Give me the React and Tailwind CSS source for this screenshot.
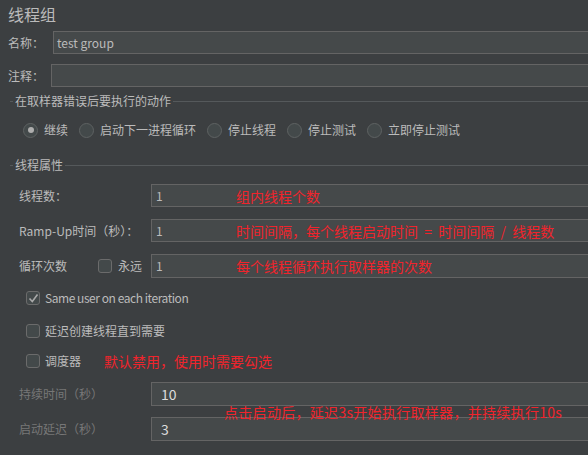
import React from 'react';

const labelCls = 'text-[12px] text-[#bbbbbb] whitespace-nowrap';
const redCls = 'text-[14px] text-[#f0242c] whitespace-nowrap leading-[18px]';

function Radio({ checked, label }) {
  return (
    <div className="flex items-center gap-[6px]">
      <span className="w-[15px] h-[15px] rounded-full border border-[#5e6262] bg-[#43494a] flex items-center justify-center">
        {checked && <span className="w-[6px] h-[6px] rounded-full bg-[#aeaeae]" />}
      </span>
      <span className={labelCls}>{label}</span>
    </div>
  );
}

function Check({ checked }) {
  return (
    <span className="w-[14px] h-[14px] rounded-[3px] border border-[#6b6b6b] bg-[#43494a] flex items-center justify-center shrink-0">
      {checked && (
        <svg width="11" height="11" viewBox="0 0 11 11">
          <polyline points="1.5,5.5 4.3,8.5 9.5,1.5" fill="none" stroke="#a9a9a9" strokeWidth="1.6" />
        </svg>
      )}
    </span>
  );
}

function Legend({ title }) {
  return (
    <div className="flex items-center h-[14px] pl-[2px] mr-[-8px]">
      <span className="w-[3px] h-px bg-[#55595b]" />
      <span className="px-[2px] text-[12px] text-[#bbbbbb] whitespace-nowrap">{title}</span>
      <span className="flex-1 h-px bg-[#55595b]" />
    </div>
  );
}

function Field({ value, note, tall, big }) {
  return (
    <div
      className={`flex-1 flex items-center mr-[-10px] border border-[#646464] bg-[#45494a] ${tall ? 'h-[24px]' : 'h-[23px]'}`}
    >
      <span className={`${big ? 'pl-[9px] text-[14px] text-[#dcdcdc]' : 'pl-[4px] text-[12px] text-[#bbbbbb]'} w-[84px] shrink-0`}>
        {value}
      </span>
      {note && <span className={`${redCls} whitespace-pre`}>{note}</span>}
    </div>
  );
}

export default function App() {
  return (
    <div className="relative w-[588px] h-[455px] overflow-hidden bg-[#3c3f41] font-['Noto_Sans_CJK_SC','Noto_Sans',sans-serif]">
      <div className="flex flex-col pt-[5px] px-[8px]">
        <div className="h-[18px] leading-[18px] text-[16px] text-[#bbbbbb]">线程组</div>

        <div className="flex items-center mt-[8px]">
          <span className={`${labelCls} w-[45px]`}>名称：</span>
          <div className="flex-1 flex items-center h-[23px] mr-[-10px] border border-[#646464] bg-[#45494a] pl-[3px] text-[12px] text-[#bbbbbb]">
            test group
          </div>
        </div>

        <div className="flex items-center mt-[10px]">
          <span className={`${labelCls} w-[43px]`}>注释：</span>
          <div className="flex-1 h-[23px] mr-[-10px] border border-[#646464] bg-[#45494a]" />
        </div>

        <div className="mt-[7px]">
          <Legend title="在取样器错误后要执行的动作" />
        </div>

        <div className="flex items-center gap-[11px] h-[16px] mt-[14px] pl-[15px]">
          <Radio checked label="继续" />
          <Radio label="启动下一进程循环" />
          <Radio label="停止线程" />
          <Radio label="停止测试" />
          <Radio label="立即停止测试" />
        </div>

        <div className="mt-[20px]">
          <Legend title="线程属性" />
        </div>

        <div className="flex items-center mt-[12px] pl-[11px]">
          <span className={`${labelCls} w-[132px]`}>线程数：</span>
          <Field value="1" note="组内线程个数" />
        </div>

        <div className="flex items-center mt-[12px] pl-[11px]">
          <span className={`${labelCls} w-[132px]`}>Ramp-Up时间（秒）：</span>
          <Field value="1" note="时间间隔，每个线程启动时间  =  时间间隔  /  线程数" />
        </div>

        <div className="flex items-center mt-[12px] pl-[11px]">
          <div className="w-[132px] flex items-center">
            <span className={`${labelCls} w-[79px]`}>循环次数</span>
            <Check />
            <span className={`${labelCls} ml-[6px]`}>永远</span>
          </div>
          <Field value="1" note="每个线程循环执行取样器的次数" tall />
        </div>

        <div className="flex items-center gap-[5px] h-[16px] mt-[12px] pl-[18px]">
          <Check checked />
          <span className={`${labelCls} tracking-[-0.45px]`}>Same user on each iteration</span>
        </div>

        <div className="flex items-center gap-[5px] h-[16px] mt-[17px] pl-[18px]">
          <Check />
          <span className={labelCls}>延迟创建线程直到需要</span>
        </div>

        <div className="flex items-center h-[16px] mt-[14px] pl-[18px]">
          <Check />
          <span className={`${labelCls} ml-[5px] w-[59px]`}>调度器</span>
          <span className={redCls}>默认禁用，使用时需要勾选</span>
        </div>

        <div className="flex items-center mt-[13px] pl-[11px]">
          <span className="text-[12px] text-[#777777] w-[132px] whitespace-nowrap">持续时间（秒）</span>
          <Field value="10" tall big />
        </div>

        <div className="flex items-center mt-[11px] pl-[11px]">
          <span className="text-[12px] text-[#777777] w-[132px] whitespace-nowrap">启动延迟（秒）</span>
          <Field value="3" tall big />
        </div>
      </div>

      <span className={`${redCls} absolute left-[224px] top-[403px] tracking-[0.3px]`}>
        点击启动后，延迟3s开始执行取样器，并持续执行10s
      </span>
    </div>
  );
}
